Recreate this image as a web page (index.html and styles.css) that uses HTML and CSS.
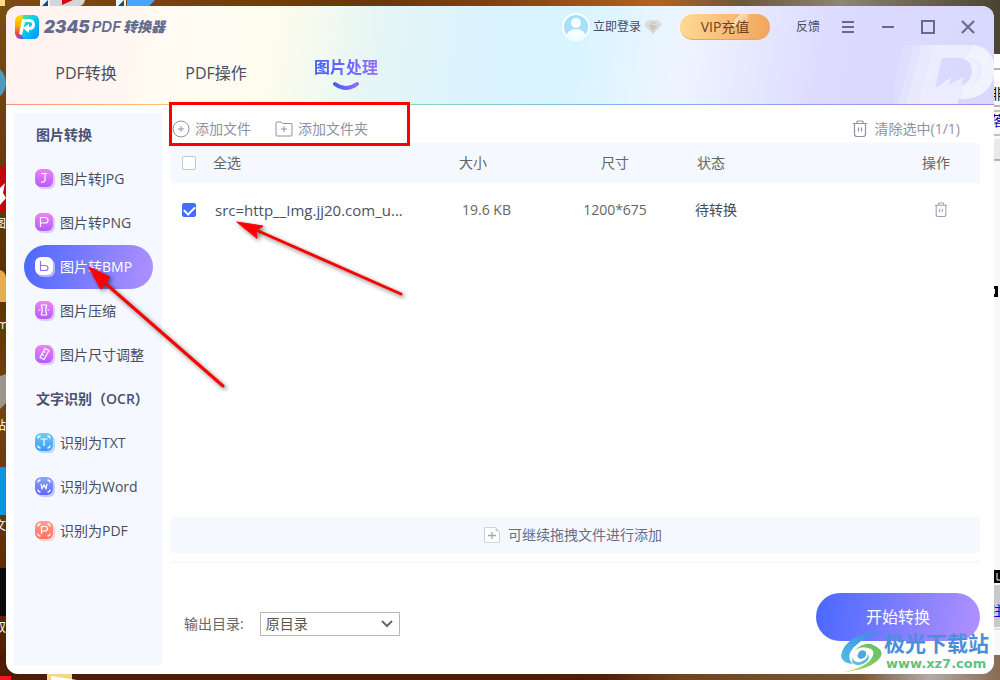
FILE: index.html
```html
<!DOCTYPE html>
<html lang="zh-CN">
<head>
<meta charset="utf-8">
<meta name="viewport" content="width=device-width, initial-scale=1">
<title>2345PDF转换器</title>
<link rel="stylesheet" href="styles.css">
</head>
<body>
<svg class="desktop" viewBox="0 0 1000 680" preserveAspectRatio="none" aria-hidden="true">
  <defs>
    <linearGradient id="top" x1="0" x2="1" y1="0" y2="0"><stop offset="0" stop-color="#7a4c16"/><stop offset=".38" stop-color="#6b3608"/><stop offset=".5" stop-color="#83420f"/><stop offset=".66" stop-color="#b3631d"/><stop offset=".74" stop-color="#6b5640"/><stop offset=".84" stop-color="#8c8578"/><stop offset="1" stop-color="#4a4332"/></linearGradient>
    <linearGradient id="left" x1="0" x2="0" y1="0" y2="1"><stop offset="0" stop-color="#7a4c16"/><stop offset=".4" stop-color="#573108"/><stop offset=".6" stop-color="#70450f"/><stop offset="1" stop-color="#4c1d03"/></linearGradient>
    <linearGradient id="low" x1="0" x2="1" y1="0" y2="0"><stop offset="0" stop-color="#4c1c03"/><stop offset=".6" stop-color="#4f1e04"/><stop offset=".68" stop-color="#6f431e"/><stop offset=".86" stop-color="#7d5836"/><stop offset=".93" stop-color="#b2aaa8"/><stop offset="1" stop-color="#8a6a51"/></linearGradient>
  </defs>
  <rect width="1000" height="54" fill="url(#top)"/>
  <rect y="8" width="30" height="672" fill="url(#left)"/>
  <rect y="650" width="1000" height="30" fill="url(#low)"/>
  <path d="M0 0H5V6H0Z" fill="#ffdc83"/>
  <path d="M40 0H50V6H40ZM116 0H126V6H116Z" fill="#edf3f8"/><path d="M42 6L48 0V6ZM118 6L124 0V6Z" fill="#184a82"/>
  <path d="M50 0H85Q84 5 80 6H50Z" fill="#d5d5d5"/><path d="M62 0H73L62 5Z" fill="#d40808"/>
  <path d="M127 0H155L149 6H127Z" fill="#45a6fb"/>
  <path d="M0 69Q6 75 6 84Q5 92 0 96Z" fill="#4f9ab8"/>
  <path d="M0 168L6 163V211H0Z" fill="#c60010"/><path d="M0 188L5 183L3 193L6 198L0 205Z" fill="#fff"/>
  <path d="M0 270Q6 272 6 278V302H0Z" fill="#e8ae4d"/><path d="M0 376L6 374V403L0 409Z" fill="#9b968d"/>
  <rect y="467" width="6" height="48" fill="#0c94de"/><rect y="568" width="6" height="48" fill="#090909"/>
  <path d="M0 676H11V680H0Z" fill="#f2171c"/><path d="M47 674H72V680H47Z" fill="#f4d589"/><path d="M51 676L77 680H51Z" fill="#fff"/>
  <g class="desktop-label"><text x="-6" y="228">图</text><text x="-3" y="329">m</text><text x="-6" y="430">站</text><text x="-6" y="530">文</text><text x="-6" y="632">双</text></g>
  <path d="M980 54H1000V655H980Z" fill="#f8f8f8"/><path d="M980 54H1000V82H980Z" fill="#fff"/>
  <path d="M980 69H1000M980 106H1000" stroke="#b4b4b4" stroke-width="2"/><path d="M980 111H1000M980 135H1000" stroke="#85898e"/>
  <path d="M980 139H1000V160H980Z" fill="#e9e9e9"/><path d="M980 160H1000" stroke="#777"/>
  <path d="M990 286H998V297H990ZM990 570H1000V583H990Z" fill="#050505"/><path d="M990 289H995V294H990" fill="#fff"/><path d="M997 573V580H1000" fill="none" stroke="#fff"/>
  <path d="M980 585H1000V627H980Z" fill="#c9c9c9"/><path d="M980 628H1000V630H980Z" fill="#ddd"/>
  <g class="desktop-link"><text x="990" y="99" fill="#111">非</text><text x="990" y="126">落</text><text x="990" y="616" fill="#00f">注</text></g>
</svg>

<svg class="symbols" aria-hidden="true">
  <defs>
    <linearGradient id="pink" x1="0" x2="0" y1="0" y2="1"><stop stop-color="#ee83f2"/><stop offset="1" stop-color="#b45cff"/></linearGradient>
    <linearGradient id="sky" x1="0" x2="0" y1="0" y2="1"><stop stop-color="#69cff5"/><stop offset="1" stop-color="#4296fc"/></linearGradient>
    <linearGradient id="indigo" x1="0" x2="0" y1="0" y2="1"><stop stop-color="#8aa5ff"/><stop offset="1" stop-color="#6366ff"/></linearGradient>
    <linearGradient id="coral" x1="0" x2="0" y1="0" y2="1"><stop stop-color="#ffa18f"/><stop offset="1" stop-color="#ff705d"/></linearGradient>
  </defs>
  <symbol id="trash" viewBox="0 0 16 18"><g fill="none" stroke="currentColor" stroke-width="1.2"><path d="M1 3.5H15M5 3V1.5Q5 1 6 1H10Q11 1 11 1.5V3M2.5 3.5V14Q2.5 16.5 5 16.5H11Q13.5 16.5 13.5 14V3.5M6.5 7.5V11.5M9.5 7.5V11.5"/></g></symbol>
  <symbol id="corners" viewBox="0 0 20 20"><path d="M3 5.5Q3 3 5.500 3M12.500 3Q15 3 15 5.500M3 12.500Q3 15 5.500 15M12.500 15Q15 15 15 12.500" fill="none" stroke="#fff" stroke-width="1.3"/></symbol>
</svg>

<div class="window">
  <header class="header">
    <svg class="header-mark" width="100" height="60" viewBox="0 0 100 60" aria-hidden="true"><g fill="#fff"><path opacity=".12" d="M9 1H40L26 60H-5Z"/><path opacity=".18" d="M20 1H42L27 60H4Z"/><path opacity=".22" d="M28 1H42L27 60H12Z"/><path opacity=".5" fill-rule="evenodd" d="M41 1H80Q100 3 101 26Q98 52 72 55H64V60H26ZM48 14L41 45L57 33L55 41L69 33L68 42Q78 37 78 26Q76 15 66 14Z"/><path opacity=".22" d="M66 14H72Q84 17 84 27Q83 37 76 42H68Q78 37 78 26Q76 15 66 14Z"/><path opacity=".4" d="M72 14H79Q90 18 88 29Q86 38 78 42H68V55H72Q98 52 101 26Q100 7 80 1Z"/></g></svg>
    <div class="titlebar">
      <div class="brand">
        <svg width="24" height="24" viewBox="0 0 24 24" aria-hidden="true"><defs><linearGradient id="b1" x1="0" x2="0" y2="1"><stop stop-color="#ffe100"/><stop offset=".45" stop-color="#ffad00"/><stop offset=".75" stop-color="#ff423e"/><stop offset="1" stop-color="#7048ed"/></linearGradient><linearGradient id="b2" x1="0" x2="1" y2="1"><stop stop-color="#59e887"/><stop offset=".5" stop-color="#00c8f5"/><stop offset="1" stop-color="#078cff"/></linearGradient></defs><rect width="24" height="24" rx="6" fill="url(#b1)"/><path d="M8 0H18Q24 0 24 6V18Q24 24 18 24H9L5 18Z" fill="url(#b2)"/><path d="M7 4H14Q20 4 20 10Q20 15 14 15V18L8 13L14 9V12Q17 12 17 9Q17 7 14 7H10L7 20L4 19Z" fill="#fff"/></svg>
        <h1 class="brand-name"><span class="brand-num">2345</span><span class="brand-pdf">PDF</span><span class="brand-cn">转换器</span></h1>
      </div>
      <div class="account">
        <button class="login" type="button"><svg width="28" height="28" viewBox="0 0 28 28" aria-hidden="true"><defs><clipPath id="ava"><circle cx="14" cy="14" r="12"/></clipPath></defs><circle cx="14" cy="14" r="13" fill="#a8ddfb" stroke="#f5fdff" stroke-width="2"/><g clip-path="url(#ava)" fill="#f7fcff"><circle cx="14" cy="10" r="5"/><ellipse cx="14" cy="24" rx="10" ry="8"/></g></svg><span>立即登录</span><svg width="18" height="16" viewBox="0 0 18 16" aria-hidden="true"><path d="M4 1H14L18 6L9 15L0 6Z" fill="#dedddc"/><path d="M4 6L9 15L14 6" fill="#d0cfce"/><path d="M12 4Q7 3 7 5.500Q7 7 9 7Q12 7 11 9Q9 10 6 9" fill="none" stroke="#bdbcbc"/></svg></button>
        <button class="vip" type="button">VIP充值</button>
      </div>
      <button class="feedback" type="button">反馈</button>
      <div class="controls">
        <button type="button" aria-label="菜单"><svg width="14" height="14" viewBox="0 0 14 14"><path d="M1 2H13M1 7H13M1 12H13"/></svg></button>
        <button type="button" aria-label="最小化"><svg width="14" height="14" viewBox="0 0 14 14"><path d="M1 7H13"/></svg></button>
        <button type="button" aria-label="最大化"><svg width="14" height="14" viewBox="0 0 14 14"><path d="M1 1H13V13H1Z"/></svg></button>
        <button type="button" aria-label="关闭"><svg width="14" height="14" viewBox="0 0 14 14"><path d="M1 1L13 13M13 1L1 13"/></svg></button>
      </div>
    </div>
    <nav class="tabs">
      <a class="tab" href="#convert">PDF转换</a>
      <a class="tab" href="#operate">PDF操作</a>
      <a class="tab tab-active" href="#image"><span>图片处理</span><svg width="28" height="10" viewBox="0 0 28 10" aria-hidden="true"><defs><linearGradient id="smile"><stop stop-color="#405eff"/><stop offset="1" stop-color="#956bff"/></linearGradient></defs><path d="M3 3Q14 11 25 3" fill="none" stroke="url(#smile)" stroke-width="4" stroke-linecap="round"/></svg></a>
    </nav>
  </header>

  <div class="content">
    <aside class="sidebar">
      <h2>图片转换</h2>
      <a class="item" href="#jpg"><svg viewBox="0 0 20 20"><rect x="2" y="2" width="18" height="18" rx="6" fill="#dccbff"/><rect width="18" height="18" rx="6" fill="url(#pink)"/><path class="glyph" d="M6 4.500H12M10 4.500V11Q10 13.500 6 13"/></svg>图片转JPG</a>
      <a class="item" href="#png"><svg viewBox="0 0 20 20"><rect x="2" y="2" width="18" height="18" rx="6" fill="#dccbff"/><rect width="18" height="18" rx="6" fill="url(#pink)"/><path class="glyph" d="M5.500 14V4.500H10Q13 4.500 13 7.500Q13 10 10 10H5.500"/></svg>图片转PNG</a>
      <a class="item item-active" href="#bmp"><svg viewBox="0 0 20 20"><rect x="2" y="2" width="18" height="18" rx="6" fill="#b6b4ff"/><rect width="18" height="18" rx="6" fill="#fff"/><path class="glyph glyph-violet" d="M5.500 4V13.500H10Q13 13.500 13 11Q13 8.500 10 8.500H5.500"/></svg>图片转BMP</a>
      <a class="item" href="#compress"><svg viewBox="0 0 20 20"><rect x="2" y="2" width="18" height="18" rx="6" fill="#dccbff"/><rect width="18" height="18" rx="6" fill="url(#pink)"/><path class="glyph" d="M6.500 4H11.500V6L10.800 7V11L11.500 12V14H6.500V12L7.200 11V7L6.500 6ZM3.500 9H5.500M12.500 9H14.500"/></svg>图片压缩</a>
      <a class="item" href="#resize"><svg viewBox="0 0 20 20"><rect x="2" y="2" width="18" height="18" rx="6" fill="#dccbff"/><rect width="18" height="18" rx="6" fill="url(#pink)"/><path class="glyph" d="M10 3.500L14 5.500L9 14.500L5 12.500ZM8.500 6.500L10.500 7.500M7 9.500L9 10.500"/></svg>图片尺寸调整</a>
      <h2>文字识别（OCR）</h2>
      <a class="item" href="#txt"><svg viewBox="0 0 20 20"><rect x="2" y="2" width="18" height="18" rx="6" fill="#b8d8ff"/><rect width="18" height="18" rx="6" fill="url(#sky)"/><use href="#corners" width="20" height="20"/><path class="glyph" d="M5.500 6H12.500M9 6V13"/></svg>识别为TXT</a>
      <a class="item" href="#word"><svg viewBox="0 0 20 20"><rect x="2" y="2" width="18" height="18" rx="6" fill="#c8cbff"/><rect width="18" height="18" rx="6" fill="url(#indigo)"/><use href="#corners" width="20" height="20"/><path class="glyph" d="M6 7L7 11.500L9 8L11 11.500L12 7"/></svg>识别为Word</a>
      <a class="item" href="#pdf"><svg viewBox="0 0 20 20"><rect x="2" y="2" width="18" height="18" rx="6" fill="#ffcfc9"/><rect width="18" height="18" rx="6" fill="url(#coral)"/><use href="#corners" width="20" height="20"/><path class="glyph" d="M6.500 13V5.500H10Q12.500 5.500 12.500 7.500Q12.500 10 10 10H6.500"/></svg>识别为PDF</a>
    </aside>

    <main class="main">
      <div class="toolbar">
        <button type="button"><svg width="18" height="18" viewBox="0 0 18 18"><path d="M9 6V12M6 9H12M17 9A8 8 0 1 1 1 9A8 8 0 1 1 17 9Z"/></svg>添加文件</button>
        <button type="button"><svg width="18" height="18" viewBox="0 0 18 18"><path d="M1 3Q1 2 2 2H6L7.500 3.500H16Q17 3.500 17 4.500V15Q17 16 16 16H2Q1 16 1 15ZM9 6V12M6 9H12"/></svg>添加文件夹</button>
        <button class="clear" type="button"><svg width="16" height="18"><use href="#trash"/></svg>清除选中(1/1)</button>
      </div>
      <div class="list">
        <table>
          <colgroup><col class="col-check"><col><col class="col-size"><col class="col-dim"><col class="col-status"><col class="col-action"></colgroup>
          <thead><tr><th class="check"><input type="checkbox" id="all"></th><th><label for="all">全选</label></th><th>大小</th><th class="centered">尺寸</th><th class="status">状态</th><th class="action">操作</th></tr></thead>
          <tbody><tr><td class="check"><input type="checkbox" id="file" checked></td><td class="name"><label for="file">src=http__Img.jj20.com_u...</label></td><td class="size">19.6 KB</td><td class="centered">1200*675</td><td class="file-status">待转换</td><td class="action"><button type="button" aria-label="删除"><svg width="14" height="16"><use href="#trash"/></svg></button></td></tr></tbody>
        </table>
      </div>
      <div class="dropzone"><svg width="16" height="16" viewBox="0 0 16 16" aria-hidden="true"><path d="M.5.5H11.500L15.500 4.500V15.500H.5Z" fill="#fff" stroke="#d0d1d6"/><path d="M11.500.5V4.500H15.500Z" fill="#d0d1d6"/><path d="M8 5V12M4 8.500H12" stroke="#a4a6b1" stroke-width="1.3"/></svg>可继续拖拽文件进行添加</div>
      <footer class="footer">
        <div class="output"><label for="output">输出目录:</label><select id="output"><option>原目录</option></select></div>
        <button class="start" type="button">开始转换</button>
      </footer>
    </main>
  </div>
</div>

<svg class="notes" width="1000" height="680" viewBox="0 0 1000 680" aria-hidden="true">
  <rect x="170.500" y="103.500" width="238" height="41" fill="none" stroke="#f00" stroke-width="3"/>
  <g class="arrow"><path d="M401 294L256 230" stroke-width="3"/><path d="M237 222L263 226L256 231L257 238Z"/></g>
  <g class="arrow"><path d="M223 386L105 283" stroke-width="3"/><path d="M89 267L110 277L105 282L101 289Z"/></g>
</svg>
<div class="watermark" aria-hidden="true">
  <svg width="42" height="40" viewBox="0 0 42 40"><defs><linearGradient id="w1" x1="1" x2="0" y2="1"><stop stop-color="#348ddd"/><stop offset="1" stop-color="#55bce8"/></linearGradient><linearGradient id="w2" x1="1" x2="0" y2="1"><stop stop-color="#62bb66"/><stop offset=".6" stop-color="#8acb66"/><stop offset="1" stop-color="#e0d661"/></linearGradient></defs><path d="M42 0Q3 2 0 24Q1 31 12 32Q4 25 13 15Q24 4 42 0Z" fill="url(#w1)"/><path d="M19 19Q14 24 19 27Q26 27 25 20Q22 17 19 19Z" fill="#4fa8e0"/><path d="M14 18Q25 8 34 14Q46 20 36 29Q26 38 2 40Q24 36 30 27Q36 18 27 16Q20 14 14 18Z" fill="url(#w2)"/><path d="M12 25Q12 31 19 30Q26 28 27 22Q30 28 22 32Q13 35 11 29Z" fill="#62bfc8"/></svg>
  <div class="watermark-text"><span class="watermark-name">极光下载站</span><span class="watermark-url">www.xz7.com</span></div>
</div>
</body>
</html>
```
FILE: styles.css
```css
* { box-sizing: border-box; }

body {
  margin: 0;
  min-height: 100vh;
  padding: 6px;
  display: flex;
  position: relative;
  overflow: hidden;
  background: #4c1d03;
  color: #50535f;
  font: 14px/20px "Open Sans", "Noto Sans CJK SC", sans-serif;
}

button {
  padding: 0;
  border: 0;
  background: none;
  color: inherit;
  font: inherit;
  white-space: nowrap;
}

a { color: inherit; text-decoration: none; }

.desktop {
  position: absolute;
  inset: 0;
  width: 100%;
  height: 100%;
}

.desktop-label { fill: #fff; font-size: 12px; }
.desktop-link { fill: #0000a8; font-size: 14px; }

.symbols { position: absolute; width: 0; height: 0; }

.window {
  flex: 1;
  min-width: 0;
  display: flex;
  flex-direction: column;
  position: relative;
  overflow: hidden;
  border-radius: 12px;
  background: #fff;
}

.header {
  position: relative;
  padding-bottom: 1px;
  background:
    linear-gradient(90deg, #ff8f83, #ffd66a 22%, #82d7b9 44%, #82aef7 64%, #ae85ef) bottom / 100% 1px no-repeat,
    linear-gradient(100deg, #fff1ef 0%, #fffcf3 20%, #fcfced 28%, #e4f5f5 38%, #daf3ff 49%, #d8f4ff 57%, #eef5ff 68%, #dddcff 82%, #d8d7fd 100%);
}

.header-mark { position: absolute; right: 0; bottom: 1px; }

.titlebar {
  height: 42px;
  padding: 0 6px 0 9px;
  display: flex;
  align-items: center;
  position: relative;
}

.brand { display: flex; align-items: center; gap: 5px; margin-right: auto; }

.brand-name {
  margin: 0;
  display: flex;
  align-items: center;
  color: #626b8e;
  font-size: 18px;
  line-height: 24px;
  font-style: italic;
}

.brand-num { font-family: Inter, sans-serif; font-size: 17px; font-weight: 900; }
.brand-pdf { margin: 0 2px; font-family: Inter, sans-serif; font-size: 15px; font-weight: 600; }
.brand-cn { font-size: 14px; font-weight: 900; }

.account { display: flex; align-items: center; gap: 18px; margin-right: 26px; }

.login { display: flex; align-items: center; gap: 3px; color: #474d66; font-size: 12px; }

.vip {
  width: 90px;
  height: 26px;
  border-radius: 13px;
  background:
    linear-gradient(130deg, transparent 40%, #fce0b4 40%, #f5c182 90%) 48px 0 / 20px 12px no-repeat,
    linear-gradient(100deg, #ffda98, #f2a45a);
  border-bottom: 1px solid #eda354;
  color: #713d25;
}

.feedback { margin-right: 8px; color: #474d66; font-size: 12px; }

.controls { display: flex; }
.controls button { width: 40px; height: 32px; display: grid; place-items: center; }
.controls path { fill: none; stroke: #646b8b; stroke-width: 2; }

.tabs {
  height: 56px;
  padding: 7px 0 0 34px;
  display: flex;
  align-items: flex-start;
  font-size: 16px;
  line-height: 24px;
}

.tab { width: 130px; padding-top: 6px; text-align: center; color: #4a4d5d; }
.tab:first-child { width: 92px; margin-right: 19px; }
.tab-active { padding-top: 0; display: flex; flex-direction: column; align-items: center; }
.tab-active span { background: linear-gradient(90deg, #405eff, #956bff); background-clip: text; color: transparent; font-weight: 700; }
.tab-active svg { margin-top: 2px; }

.content { flex: 1; display: flex; gap: 9px; padding: 0 14px 0 8px; }

.sidebar {
  width: 148px;
  flex-shrink: 0;
  margin: 8px 0 9px;
  padding: 0 9px 0 10px;
  background: #f5f8ff;
}

.sidebar h2 {
  margin: 0;
  padding-left: 12px;
  color: #4a5173;
  font-size: 14px;
  line-height: 44px;
  font-weight: 600;
  white-space: nowrap;
}

.item {
  height: 44px;
  padding-left: 11px;
  display: flex;
  align-items: center;
  gap: 5px;
  border-radius: 22px;
  color: #494c5c;
  line-height: 22px;
  white-space: nowrap;
}

.item svg { width: 20px; height: 20px; flex-shrink: 0; }
.item-active { background: linear-gradient(100deg, #4c68ff, #af91ff); color: #fff; }
.glyph { fill: none; stroke: #fff; stroke-width: 1.2; }
.glyph-violet { stroke: #9570f8; }

.main { flex: 1; min-width: 0; display: flex; flex-direction: column; }

.toolbar {
  height: 38px;
  padding: 9px 20px 0 1px;
  display: flex;
  align-items: center;
  gap: 24px;
  color: #8e92a3;
}

.toolbar button { display: flex; align-items: center; gap: 5px; }
.toolbar svg { fill: none; stroke: currentColor; }
.toolbar .clear { margin-left: auto; gap: 7px; }

.list { flex: 1; }
table { width: 100%; table-layout: fixed; border-collapse: collapse; color: #666; }
.col-check { width: 42px; }
.col-size { width: 86px; }
.col-dim { width: 140px; }
.col-status { width: 150px; }
.col-action { width: 145px; }
th, td { padding: 0; text-align: left; font-weight: 400; white-space: nowrap; }
thead tr { height: 40px; background: #f5f8ff; }
tbody tr { height: 54px; }
.check { padding-left: 11px; }
.name { padding-left: 2px; color: #4c4f61; font-size: 15px; }
.size { padding-left: 3px; }
.centered { text-align: center; }
.status { padding-left: 12px; }
.file-status { padding-left: 10px; color: #474a58; }
.action { padding-right: 30px; text-align: right; }
td.action { padding-right: 32px; color: #9d9faf; }
td button { display: block; margin-left: auto; }
td svg { display: block; }

input[type="checkbox"] {
  appearance: none;
  display: block;
  width: 14px;
  height: 14px;
  margin: 0;
  border: 1px solid #c7c7cb;
  border-radius: 2px;
  background: #fff;
}

input[type="checkbox"]:checked {
  border-color: #426fff;
  background: #426fff;
  display: grid;
  place-items: center;
}

input[type="checkbox"]:checked::before {
  content: "";
  width: 9px;
  height: 5px;
  margin-bottom: 2px;
  border: solid #fff;
  border-width: 0 0 2px 2px;
  transform: rotate(-45deg);
}

.dropzone {
  height: 36px;
  padding-right: 5px;
  display: flex;
  align-items: center;
  justify-content: center;
  gap: 8px;
  background: #f5f8ff;
  color: #686d88;
}

.footer {
  margin-top: 8px;
  padding: 30px 0 33px 13px;
  display: flex;
  align-items: center;
  justify-content: space-between;
  border-top: 2px solid #f5f8ff;
}

.output { padding-top: 14px; display: flex; align-items: center; gap: 16px; color: #666; }

select {
  appearance: none;
  width: 140px;
  height: 24px;
  padding: 0 5px;
  border: 1px solid #b7b7b7;
  border-radius: 0;
  background: #fff url("data:image/svg+xml,%3Csvg xmlns='http://www.w3.org/2000/svg' width='12' height='8'%3E%3Cpath d='M1 1L6 6L11 1' fill='none' stroke='%23686868' stroke-width='2'/%3E%3C/svg%3E") right 6px center no-repeat;
  color: #555;
  font: inherit;
}

.start {
  width: 164px;
  height: 48px;
  border-radius: 24px;
  background: linear-gradient(100deg, #4868ff, #b291ff);
  color: #fff;
  font-size: 16px;
}

.notes { position: absolute; left: 0; top: 0; pointer-events: none; }
.arrow { fill: #f00; stroke: #f00; stroke-linecap: round; filter: drop-shadow(2px 2px 2px #0008); }

.watermark {
  position: absolute;
  right: 11px;
  bottom: 7px;
  display: flex;
  align-items: center;
  gap: 1px;
  pointer-events: none;
}

.watermark-text { display: flex; flex-direction: column; font-weight: 700; }
.watermark-name { color: #4b8fd9; font-size: 21px; line-height: 24px; }
.watermark-url { padding-left: 2px; color: #5fc183; font: 700 13px/18px "DejaVu Sans", sans-serif; }
```
